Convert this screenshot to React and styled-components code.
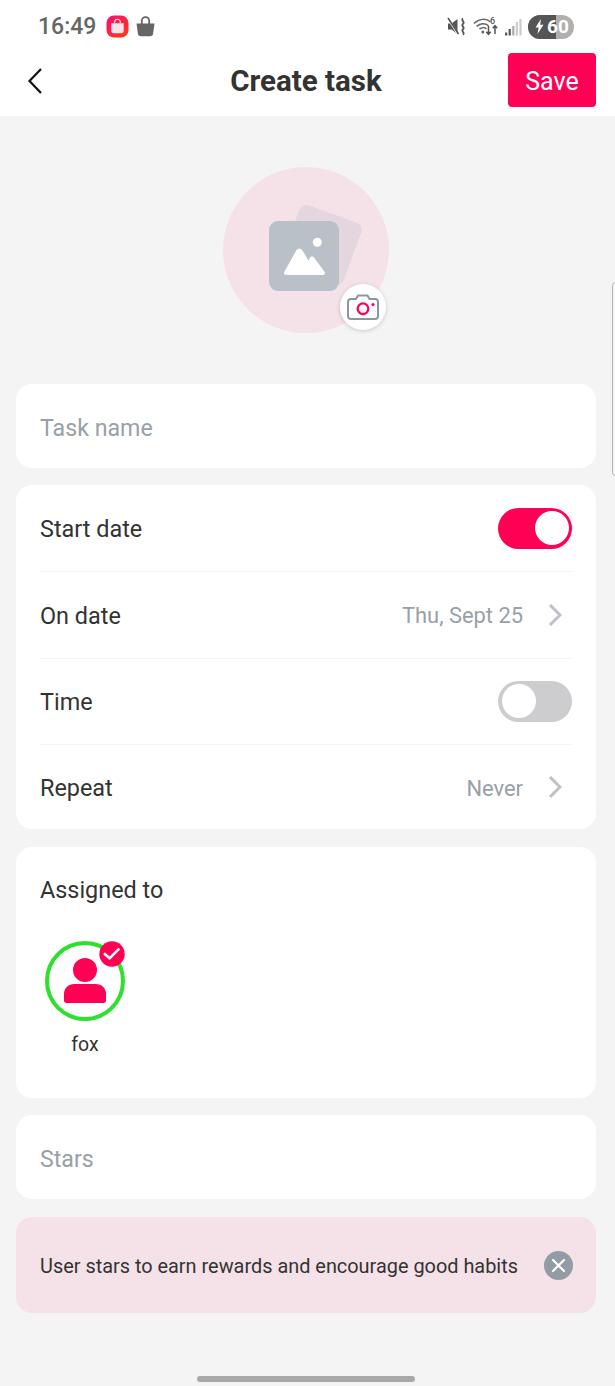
import React from 'react'
import styled, { createGlobalStyle } from 'styled-components'

const PINK = '#ff0055'

const GlobalStyle = createGlobalStyle`
  html, body {
    margin: 0;
    padding: 0;
    background: #f4f4f4;
    font-family: Roboto, "Liberation Sans", sans-serif;
  }
  * { box-sizing: border-box; }
`

export default function App() {
  return (
    <>
      <GlobalStyle />
      <Page>
        <EdgeHandle />
        <StatusBar>
          <StatusLeft>
            <Clock>16:49</Clock>
            <ShopIcon />
            <BagIcon />
          </StatusLeft>
          <StatusRight>
            <MuteIcon />
            <WifiIcon />
            <SignalIcon />
            <Battery>
              <BatteryFill />
              <BatteryLabel>
                <BoltIcon />
                <span>60</span>
              </BatteryLabel>
            </Battery>
          </StatusRight>
        </StatusBar>
        <Header>
          <BackButton>
            <svg width="18" height="28" viewBox="0 0 18 28" fill="none">
              <path d="M15 2 3.500 14 15 26" stroke="#111" strokeWidth="2.200" />
            </svg>
          </BackButton>
          <Title>Create task</Title>
          <SaveButton>Save</SaveButton>
        </Header>

        <Content>
          <AvatarWrap>
            <AvatarCircle>
              <PhotoIcon />
            </AvatarCircle>
            <CameraBadge>
              <CameraIcon />
            </CameraBadge>
          </AvatarWrap>

          <Cards>
            <Card>
              <Row>
                <Placeholder>Task name</Placeholder>
              </Row>
            </Card>

            <Card>
              <Row $divider>
                <Label>Start date</Label>
                <Toggle $on />
              </Row>
              <Row $divider>
                <Label>On date</Label>
                <Value>Thu, Sept 25<Chevron /></Value>
              </Row>
              <Row $divider>
                <Label>Time</Label>
                <Toggle />
              </Row>
              <Row>
                <Label>Repeat</Label>
                <Value>Never<Chevron /></Value>
              </Row>
            </Card>

            <AssignCard>
              <AssignTitle>Assigned to</AssignTitle>
              <Person>
                <PersonRing>
                  <PersonIcon />
                  <CheckBadge>
                    <svg width="26" height="26" viewBox="0 0 26 26">
                      <circle cx="13" cy="13" r="12.700" fill={PINK} />
                      <path d="M5.800 13 10.600 17.300 19.500 8.300" fill="none" stroke="#fff" strokeWidth="2.600" strokeLinecap="round" strokeLinejoin="round" />
                    </svg>
                  </CheckBadge>
                </PersonRing>
                <PersonName>fox</PersonName>
              </Person>
            </AssignCard>

            <Card>
              <Row>
                <Placeholder>Stars</Placeholder>
              </Row>
            </Card>

            <Notice>
              <NoticeText>User stars to earn rewards and encourage good habits</NoticeText>
              <CloseIcon />
            </Notice>
          </Cards>
        </Content>
        <HomeBar />
      </Page>
    </>
  )
}

function ShopIcon() {
  return (
    <svg width="23" height="23" viewBox="0 0 23 23">
      <defs>
        <linearGradient id="shop" x1="0" y1="0" x2="1" y2="1">
          <stop offset="0" stopColor="#ff0a78" />
          <stop offset="1" stopColor="#ff3d0a" />
        </linearGradient>
      </defs>
      <rect x="0.500" y="0.500" width="22" height="22" rx="7.500" fill="url(#shop)" />
      <path d="M5.300 8.200h12.400v8a2 2 0 0 1-2 2H7.300a2 2 0 0 1-2-2z" fill="#fbe3ea" />
      <path d="M8.700 8.200V7a2.800 2.800 0 0 1 5.600 0v1.200" fill="none" stroke="#fbe3ea" strokeWidth="1.100" />
    </svg>
  )
}

function BagIcon() {
  return (
    <svg width="19" height="21" viewBox="0 0 19 21">
      <path d="M0.500 7.500h18l-1.400 10a3 3 0 0 1-3 2.800H4.900a3 3 0 0 1-3-2.800z" fill="#666" />
      <path d="M5.800 8V4.800a3.700 3.700 0 0 1 7.400 0V8" fill="none" stroke="#666" strokeWidth="1.800" />
    </svg>
  )
}

function MuteIcon() {
  return (
    <svg width="20" height="20" viewBox="0 0 20 20" fill="none">
      <path d="M1 6.500h3.500L10.500 2v15L4.500 12.500H1z" fill="#555" />
      <path d="M1 1.500 11.500 18" stroke="#fff" strokeWidth="2.200" />
      <path d="M1 1 11.500 17" stroke="#555" strokeWidth="1.600" />
      <path d="M16 1.500c-2.600 2 2.600 3.200 0 5.400s2.600 3.200 0 5.400 2.600 3.200 0 5.400" stroke="#555" strokeWidth="1.800" />
    </svg>
  )
}

function WifiIcon() {
  return (
    <svg width="25" height="22" viewBox="0 0 25 22" fill="none">
      <path d="M1 7.500C6 2.500 13 2 17.500 6" stroke="#666" strokeWidth="1.500" />
      <path d="M3.600 10.400c3.600-3.400 8.600-3.600 12-.6" stroke="#666" strokeWidth="1.500" />
      <path d="M6.400 13.200c2.200-2 5.200-2.100 7-.3" stroke="#666" strokeWidth="1.500" />
      <circle cx="9.800" cy="16" r="1.500" fill="#666" />
      <text x="17" y="7.500" fontFamily="Roboto, sans-serif" fontSize="9" fontWeight="500" fill="#555">6</text>
      <path d="M15.500 10v8m-2.200-2.300 2.200 2.600 2.200-2.600M22 18v-8m-2.200 2.300 2.200-2.600 2.200 2.600" stroke="#555" strokeWidth="1.500" />
    </svg>
  )
}

function SignalIcon() {
  return (
    <svg width="17" height="18" viewBox="0 0 17 18">
      <rect x="0" y="14.500" width="2.200" height="3" fill="#555" />
      <rect x="3.600" y="11" width="2.200" height="6.500" fill="#555" />
      <rect x="7.200" y="8" width="2.200" height="9.500" fill="#aaa" />
      <rect x="10.800" y="4" width="2.200" height="13.500" fill="#ccc" />
      <rect x="14.400" y="1" width="2.200" height="16.500" fill="#ccc" />
    </svg>
  )
}

function BoltIcon() {
  return (
    <svg width="9" height="15" viewBox="0 0 9 15">
      <path d="M6 0 0.500 8.500H3.600L2.500 15 8.500 5.800H5.200z" fill="#fff" />
    </svg>
  )
}

function PhotoIcon() {
  return (
    <svg width="100" height="96" viewBox="0 0 100 96">
      <rect x="23.500" y="14" width="66" height="66" rx="8" fill="#e3d6de" transform="rotate(20 56.500 47)" />
      <rect x="4" y="23" width="70" height="70" rx="9" fill="#b9c0c7" />
      <circle cx="52.300" cy="44.300" r="4.500" fill="#fff" />
      <path d="M21 77c-1.700 0-2.600-1.700-1.700-3.100L31.200 52.400c1.400-2.300 4.800-2.300 6.200 0L43.500 62.500l1.300-2.500c1-1.900 3.600-1.900 4.600 0L59.700 74c.8 1.400-.2 3-1.700 3z" fill="#fff" />
    </svg>
  )
}

function CameraIcon() {
  return (
    <svg width="34" height="28" viewBox="0 0 34 28" fill="none">
      <path d="M5 6H10l2-3.500h9.500L23.500 6H29a3 3 0 0 1 3 3v14a3 3 0 0 1-3 3H5a3 3 0 0 1-3-3V9a3 3 0 0 1 3-3z" stroke="#8d969e" strokeWidth="2" strokeLinejoin="round" />
      <circle cx="17" cy="15.700" r="5.300" stroke={PINK} strokeWidth="2.300" />
      <circle cx="27" cy="11.500" r="1.600" fill={PINK} />
    </svg>
  )
}

function PersonIcon() {
  return (
    <svg width="42" height="46" viewBox="0 0 42 46">
      <circle cx="21" cy="12" r="12" fill={PINK} />
      <path d="M10.500 26h21c6 0 10.500 4 10.500 10v6.500c0 1.500-1 2.500-2.500 2.500H2.500C1 45 0 44 0 42.500V36c0-6 4.500-10 10.500-10z" fill={PINK} />
    </svg>
  )
}

function Chevron() {
  return (
    <ChevronSvg width="14" height="24" viewBox="0 0 14 24" fill="none">
      <path d="M2 2 12 12 2 22" stroke="#bdc1c6" strokeWidth="3" />
    </ChevronSvg>
  )
}

function CloseIcon() {
  return (
    <svg width="29" height="29" viewBox="0 0 29 29">
      <circle cx="14.500" cy="14.500" r="14.500" fill="#929ca4" />
      <path d="M9 9l11 11M20 9 9 20" stroke="#fff" strokeWidth="2.200" strokeLinecap="round" />
    </svg>
  )
}

const Page = styled.div`
  position: relative;
  width: 615px;
  height: 1386px;
  overflow: hidden;
  background: #f4f4f4;
  color: #333;
`

const EdgeHandle = styled.div`
  position: absolute;
  right: -4px;
  top: 282px;
  width: 7px;
  height: 194px;
  border: 1.500px solid #b4b4b4;
  border-radius: 4px;
  background: #f4f4f4;
`

const StatusBar = styled.div`
  display: flex;
  align-items: center;
  justify-content: space-between;
  height: 53px;
  padding: 0 41px 0 38px;
  background: #fff;
`

const StatusLeft = styled.div`
  display: flex;
  align-items: center;
  gap: 7px;
`

const Clock = styled.span`
  margin-right: 3px;
  font-size: 23px;
  font-weight: 500;
  color: #666;
`

const StatusRight = styled.div`
  display: flex;
  align-items: center;
  gap: 6.500px;
`

const Battery = styled.div`
  position: relative;
  width: 46px;
  height: 24px;
  border-radius: 12px;
  overflow: hidden;
  background: #b0b0b0;
`

const BatteryFill = styled.div`
  width: 28px;
  height: 100%;
  background: #555;
`

const BatteryLabel = styled.div`
  position: absolute;
  inset: 0;
  display: flex;
  align-items: center;
  gap: 3px;
  padding-left: 7px;
  color: #fff;
  font-size: 19px;
  font-weight: 700;
`

const Header = styled.header`
  position: relative;
  display: flex;
  align-items: center;
  justify-content: center;
  height: 63px;
  padding: 0 3px 7px 0;
  background: #fff;
`

const BackButton = styled.div`
  position: absolute;
  left: 26px;
  top: 14px;
  display: flex;
`

const Title = styled.h1`
  margin: 0;
  font-size: 29.500px;
  font-weight: 700;
  color: #333;
`

const SaveButton = styled.button`
  position: absolute;
  right: 19px;
  top: 0;
  width: 88px;
  height: 54px;
  padding: 3px 0 0;
  border: 0;
  border-radius: 4px;
  background: ${PINK};
  color: #fff;
  font-family: inherit;
  font-size: 25px;
`

const Content = styled.main`
  padding: 51px 19px 0 16px;
`

const AvatarWrap = styled.div`
  position: relative;
  width: 166px;
  height: 166px;
  margin: 0 auto 51px;
`

const AvatarCircle = styled.div`
  display: flex;
  align-items: center;
  justify-content: center;
  width: 100%;
  height: 100%;
  padding: 0 0 8px 18px;
  border-radius: 50%;
  background: #f5e2e8;
`

const CameraBadge = styled.div`
  position: absolute;
  right: 3px;
  bottom: 3px;
  display: flex;
  align-items: center;
  justify-content: center;
  width: 46px;
  height: 46px;
  border-radius: 50%;
  background: #fff;
  box-shadow: 0 1px 4px rgba(0, 0, 0, 0.18);
`

const Cards = styled.div`
  display: flex;
  flex-direction: column;
  gap: 17.330px;
`

const Card = styled.section`
  padding: 0 24px;
  border-radius: 16px;
  background: #fff;
`

const Row = styled.div`
  display: flex;
  align-items: center;
  justify-content: space-between;
  height: ${p => (p.$divider ? '86.660px' : '84px')};
  border-bottom: ${p => (p.$divider ? '1.500px solid #f4f4f4' : '0')};
`

const Label = styled.span`
  padding-top: 2px;
  font-size: 23.400px;
  color: #333;
`

const AssignTitle = styled.div`
  font-size: 23.400px;
  color: #333;
`

const Placeholder = styled.span`
  padding-top: 4px;
  font-size: 23.200px;
  color: #98a0a8;
`

const Value = styled.span`
  display: flex;
  align-items: center;
  padding-top: 2px;
  font-size: 21.900px;
  color: #98a0a8;
`

const ChevronSvg = styled.svg`
  margin: -2px 10px 0 25px;
`

const Toggle = styled.div`
  display: flex;
  align-items: center;
  justify-content: ${p => (p.$on ? 'flex-end' : 'flex-start')};
  width: 74px;
  height: 41px;
  padding: 0 3.500px;
  border-radius: 21px;
  background: ${p => (p.$on ? PINK : '#cdcdcf')};

  &::after {
    content: '';
    width: 34px;
    height: 34px;
    border-radius: 50%;
    background: #fff;
  }
`

const AssignCard = styled.section`
  height: 251.500px;
  padding: 29px 24px 0;
  border-radius: 16px;
  background: #fff;
`

const Person = styled.div`
  display: flex;
  flex-direction: column;
  align-items: center;
  width: 90px;
  margin-top: 37px;
`

const PersonRing = styled.div`
  position: relative;
  display: flex;
  align-items: center;
  justify-content: center;
  width: 80px;
  height: 80px;
  border: 4px solid #2de02d;
  border-radius: 50%;
  background: #fff;
`

const CheckBadge = styled.div`
  position: absolute;
  right: -4px;
  top: -4px;
  display: flex;
`

const PersonName = styled.span`
  margin-top: 12px;
  font-size: 19.500px;
  color: #333;
`

const Notice = styled.section`
  display: flex;
  align-items: center;
  justify-content: space-between;
  height: 96.500px;
  padding: 0 23px 0 24px;
  border-radius: 16px;
  background: #f5e2e8;
`

const NoticeText = styled.span`
  padding-top: 2px;
  font-size: 19.900px;
  color: #333;
`

const HomeBar = styled.div`
  position: absolute;
  left: 197px;
  bottom: 4px;
  width: 218px;
  height: 6px;
  border-radius: 3px;
  background: #a8a8a8;
`
